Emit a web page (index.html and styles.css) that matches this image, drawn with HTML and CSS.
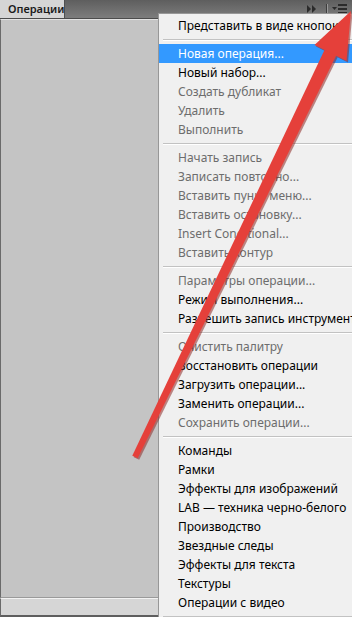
FILE: index.html
```html
<!DOCTYPE html>
<html lang="ru">
<head>
    <meta charset="UTF-8">
    <title>Операции</title>
    <link rel="stylesheet" href="styles.css">
</head>
<body>
    <div class="panel">
        <div class="tabbar">
            <div class="tab">Операции</div>
            <div class="tools">
                <svg class="ff" width="10" height="8" viewBox="0 0 10 8">
                    <polygon points="0,0 4,4 0,8" fill="#2b2b2b"/>
                    <polygon points="5,0 9,4 5,8" fill="#2b2b2b"/>
                </svg>
                <span class="vsep"></span>
                <svg class="menu-icon" width="16" height="10" viewBox="0 0 16 10">
                    <polygon points="0,3 5,3 2.5,6" fill="#2b2b2b"/>
                    <rect x="6" y="0" width="9" height="2" fill="#2b2b2b"/>
                    <rect x="6" y="4" width="9" height="2" fill="#2b2b2b"/>
                    <rect x="6" y="8" width="9" height="2" fill="#2b2b2b"/>
                </svg>
            </div>
        </div>
        <div class="content"></div>
        <div class="footer"></div>
    </div>

    <div class="menu">
        <div class="item">Представить в виде кнопок</div>
        <div class="sep"></div>
        <div class="item active">Новая операция...</div>
        <div class="item">Новый набор...</div>
        <div class="item off">Создать дубликат</div>
        <div class="item off">Удалить</div>
        <div class="item off">Выполнить</div>
        <div class="sep"></div>
        <div class="item off">Начать запись</div>
        <div class="item off">Записать повторно...</div>
        <div class="item off">Вставить пункт меню...</div>
        <div class="item off">Вставить остановку...</div>
        <div class="item off">Insert Conditional...</div>
        <div class="item off">Вставить контур</div>
        <div class="sep"></div>
        <div class="item off">Параметры операции...</div>
        <div class="item">Режим выполнения...</div>
        <div class="item">Разрешить запись инструмента</div>
        <div class="sep"></div>
        <div class="item off">Очистить палитру</div>
        <div class="item">Восстановить операции</div>
        <div class="item">Загрузить операции...</div>
        <div class="item">Заменить операции...</div>
        <div class="item off">Сохранить операции...</div>
        <div class="sep"></div>
        <div class="item">Команды</div>
        <div class="item">Рамки</div>
        <div class="item">Эффекты для изображений</div>
        <div class="item">LAB — техника черно-белого</div>
        <div class="item">Производство</div>
        <div class="item">Звездные следы</div>
        <div class="item">Эффекты для текста</div>
        <div class="item">Текстуры</div>
        <div class="item">Операции с видео</div>
        <div class="sep"></div>
    </div>

    <!-- стрелка поверх скриншота -->
    <svg class="arrow" width="352" height="617" viewBox="0 0 352 617">
        <g transform="translate(1.5,1.5)" fill="#8e2a26" opacity="0.55">
            <polygon points="132.3,455.7 137.7,458.3 336.4,55.3 324.6,49.7"/>
            <polygon points="351,11 346.5,61 314.5,45"/>
        </g>
        <g fill="#e5403a">
            <polygon points="132.3,455.7 137.7,458.3 336.4,55.3 324.6,49.7"/>
            <polygon points="351,11 346.5,61 314.5,45"/>
        </g>
    </svg>
</body>
</html>
```

FILE: styles.css
```css
body {
    margin: 0;
    width: 352px;
    height: 617px;
    overflow: hidden;
    position: relative;
    font-family: "Noto Sans", "Open Sans", sans-serif;
}
.panel {
    width: 352px;
    height: 617px;
    display: flex;
    flex-direction: column;
    background-color: #c4c4c4;
}
.tabbar {
    height: 18px;
    display: flex;
    background: linear-gradient(#5e5e5e, #7d7d7d);
    border-bottom: 1px solid #4c4c4c;
}
.tab {
    width: 65px;
    background-color: #d5d5d5;
    border-right: 1px solid #4f4f4f;
    box-sizing: border-box;
    padding-left: 8px;
    font-size: 11px;
    font-weight: 600;
    line-height: 18px;
    color: #1a1a1a;
}
.tools {
    flex: 1;
    display: flex;
    align-items: center;
    justify-content: flex-end;
    padding-right: 4px;
}
.ff {
    margin-right: 9px;
}
.vsep {
    width: 1px;
    height: 11px;
    background-color: #3d3d3d;
    border-right: 1px solid #9a9a9a;
    margin-right: 4px;
}
.content {
    flex: 1;
    background-color: #c4c4c4;
    border-left: 1px solid #6a6a6a;
    border-top: 1px solid #e2e2e2;
    border-bottom: 1px solid #9a9a9a;
}
.footer {
    height: 16px;
    background-color: #d6d6d6;
    border-top: 1px solid #f2f2f2;
    border-left: 1px solid #6a6a6a;
    border-bottom: 2px solid #5e5e5e;
}
.menu {
    position: absolute;
    left: 158px;
    top: 13px;
    width: 200px;
    height: 620px;
    box-sizing: border-box;
    padding-top: 2px;
    background-color: #f0f0f0;
    border: 1px solid #979797;
}
.item {
    height: 19px;
    line-height: 19px;
    padding-left: 19px;
    font-size: 12px;
    color: #000;
    white-space: nowrap;
}
.item.off {
    color: #6d6d6d;
}
.item.active {
    background-color: #3399ff;
    color: #fff;
}
.sep {
    height: 1px;
    margin: 4px 0 3px 4px;
    background-color: #c2c2c2;
    border-bottom: 1px solid #fff;
}
.arrow {
    position: absolute;
    left: 0;
    top: 0;
}
```
